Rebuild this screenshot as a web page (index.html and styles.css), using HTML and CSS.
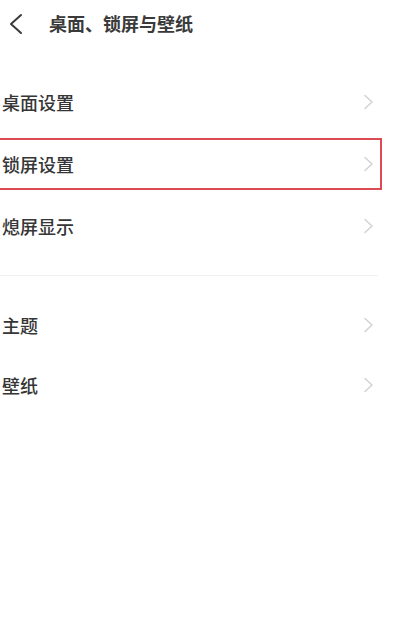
FILE: index.html
```html
<!DOCTYPE html>
<html lang="zh-CN">
<head>
<meta charset="utf-8">
<title>桌面、锁屏与壁纸</title>
<link rel="stylesheet" href="styles.css">
</head>
<body>
<header class="topbar">
  <svg class="back" width="16" height="22" viewBox="0 0 16 22"><path d="M13 2 L3 11 L13 20" fill="none" stroke="#3a3a3a" stroke-width="2" stroke-linecap="round" stroke-linejoin="round"/></svg>
  <h1 class="title">桌面、锁屏与壁纸</h1>
</header>
<main>
  <section class="group group-first">
    <div class="row"><span class="label">桌面设置</span><svg class="chev" width="11" height="16" viewBox="0 0 11 16"><path d="M2 1.5 L9 8 L2 14.5" fill="none" stroke="#d2d2d2" stroke-width="1.5" stroke-linecap="round" stroke-linejoin="round"/></svg></div>
    <div class="row highlighted"><span class="label">锁屏设置</span><svg class="chev" width="11" height="16" viewBox="0 0 11 16"><path d="M2 1.5 L9 8 L2 14.5" fill="none" stroke="#d2d2d2" stroke-width="1.5" stroke-linecap="round" stroke-linejoin="round"/></svg><span class="mark"></span></div>
    <div class="row"><span class="label">熄屏显示</span><svg class="chev" width="11" height="16" viewBox="0 0 11 16"><path d="M2 1.5 L9 8 L2 14.5" fill="none" stroke="#d2d2d2" stroke-width="1.5" stroke-linecap="round" stroke-linejoin="round"/></svg></div>
  </section>
  <div class="divider"></div>
  <section class="group group-second">
    <div class="row row-short"><span class="label">主题</span><svg class="chev" width="11" height="16" viewBox="0 0 11 16"><path d="M2 1.5 L9 8 L2 14.5" fill="none" stroke="#d2d2d2" stroke-width="1.5" stroke-linecap="round" stroke-linejoin="round"/></svg></div>
    <div class="row row-short"><span class="label">壁纸</span><svg class="chev" width="11" height="16" viewBox="0 0 11 16"><path d="M2 1.5 L9 8 L2 14.5" fill="none" stroke="#d2d2d2" stroke-width="1.5" stroke-linecap="round" stroke-linejoin="round"/></svg></div>
  </section>
</main>
</body>
</html>
```
FILE: styles.css
```css
html, body {
  margin: 0;
  padding: 0;
  background: #ffffff;
}
body {
  width: 400px;
  height: 629px;
  overflow: hidden;
  font-family: "Noto Sans CJK SC", "Noto Sans", sans-serif;
  color: #333333;
}
.topbar {
  height: 45px;
  display: flex;
  align-items: center;
  padding-left: 8px;
}
.back {
  display: block;
  margin-top: 2px;
}
.title {
  margin: 0 0 0 25px;
  font-size: 18px;
  font-weight: 700;
  color: #3a3a3a;
  line-height: 1;
}
.group-first {
  padding-top: 26px;
}
.row {
  position: relative;
  height: 62px;
  display: flex;
  align-items: center;
  justify-content: space-between;
  padding-left: 2px;
  padding-right: 26px;
}
.row-short {
  height: 60px;
}
.label {
  font-size: 18px;
  font-weight: 500;
  color: #363636;
  line-height: 1;
}
.chev {
  display: block;
}
.mark {
  position: absolute;
  left: -10px;
  top: 5px;
  width: 388px;
  height: 48px;
  border: 2px solid #dc4b53;
}
.divider {
  margin-top: 18px;
  width: 378px;
  height: 1px;
  background: #f0f0f0;
}
.group-second {
  padding-top: 19px;
}
```
